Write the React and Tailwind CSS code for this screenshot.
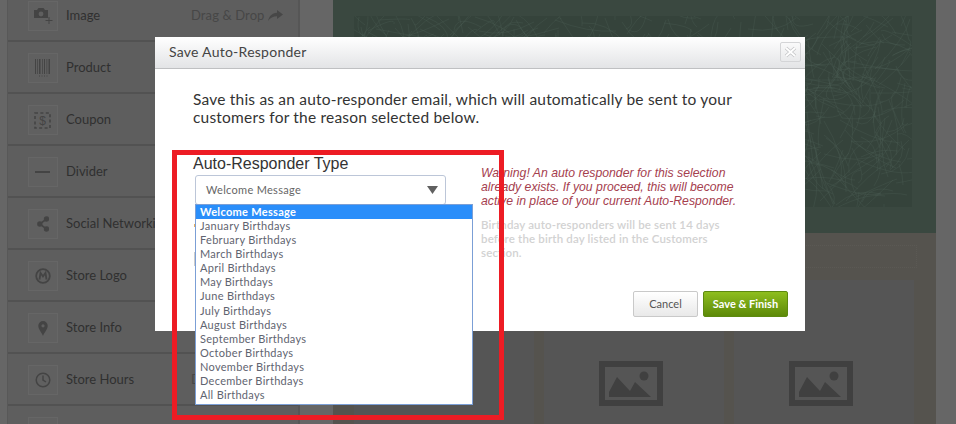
import React from "react";

const lato = "font-['Lato','Noto_Sans',sans-serif]";
const arial = "font-['Liberation_Sans',Arial,sans-serif]";

const Cam = () => (
  <svg width="20" height="20" viewBox="0 0 20 20" fill="#444">
    <path d="M1 4h3l1.500-2h5L12 4h3v8H1z" />
    <circle cx="8" cy="8" r="2.400" fill="#5f5f5f" />
    <path d="M16 11v7M12.500 14.500h7" stroke="#444" strokeWidth="1" fill="none" />
  </svg>
);
const Bar = () => (
  <svg width="16" height="18" viewBox="0 0 16 18" fill="#444">
    <path d="M0 0h1v15H0zM2 0h.7v15H2zM4 0h1.500v15H4zM7 0h.7v15H7zM9 0h1v15H9zM11.500 0h.7v15h-.7zM13.500 0h1.500v15h-1.500z" />
    <path d="M4 16.500h1v1H4zM6.500 16.500h1v1h-1zM9 16.500h1v1H9zM11.500 16.500h1v1h-1z" />
  </svg>
);
const Coupon = () => (
  <svg width="18" height="17" viewBox="0 0 18 17" fill="none" stroke="#444">
    <rect x="1" y="1" width="15" height="15" strokeWidth="1.600" strokeDasharray="3 2.400" />
    <text x="8.500" y="13" textAnchor="middle" fontSize="12" fontFamily="Liberation Sans" fill="#444" stroke="none">$</text>
  </svg>
);
const Dash = () => (
  <svg width="16" height="4" viewBox="0 0 16 4"><rect y="1" width="15" height="2" fill="#444" /></svg>
);
const Share = () => (
  <svg width="12" height="16" viewBox="0 0 12 16" fill="#444">
    <circle cx="9.500" cy="3" r="2.700" /><circle cx="2.800" cy="8" r="2.700" /><circle cx="9.500" cy="13" r="2.700" />
    <path d="M9.500 3 2.800 8l6.700 5" stroke="#444" strokeWidth="1.600" fill="none" />
  </svg>
);
const Logo = () => (
  <svg width="16" height="16" viewBox="0 0 16 16">
    <circle cx="8" cy="8" r="6.800" fill="none" stroke="#444" strokeWidth="1.800" />
    <path d="M4.500 11.500 5.500 4.800 8 8.500l2.500-3.700 1 6.700" fill="none" stroke="#444" strokeWidth="1.800" />
  </svg>
);
const Pin = () => (
  <svg width="10" height="15" viewBox="0 0 10 15">
    <path fillRule="evenodd" fill="#444" d="M5 0a4.700 4.700 0 0 1 4.700 4.700C9.700 8 6.500 11 5 15 3.500 11 .3 8 .3 4.700A4.700 4.700 0 0 1 5 0zm0 3.200a1.600 1.600 0 1 0 0 3.200 1.600 1.600 0 0 0 0-3.200z" />
  </svg>
);
const Clock = () => (
  <svg width="16" height="16" viewBox="0 0 16 16" fill="none" stroke="#444" strokeWidth="1.500">
    <circle cx="8" cy="8" r="6.800" /><path d="M8 3.500V8l3 2" />
  </svg>
);

const rows = [
  ["Image", <Cam />, true], ["Product", <Bar />], ["Coupon", <Coupon />], ["Divider", <Dash />],
  ["Social Networking", <Share />], ["Store Logo", <Logo />], ["Store Info", <Pin />], ["Store Hours", <Clock />, true], ["", null],
];

const options = ["January", "February", "March", "April", "May", "June", "July", "August", "September", "October", "November", "December", "All"];

function scribble() {
  let seed = 17;
  const r = () => ((seed = (seed * 16807) % 2147483647) / 2147483647);
  const out = [];
  for (let i = 0; i < 900; i++) {
    const x = r() * 558, y = r() * 191, a = r() * 6.28, l = 20 + r() * 45;
    const x2 = x + Math.cos(a) * l, y2 = y + Math.sin(a) * l;
    const cx = (x + x2) / 2 + (r() - 0.5) * 30, cy = (y + y2) / 2 + (r() - 0.5) * 30;
    out.push(`M${x.toFixed(0)} ${y.toFixed(0)}Q${cx.toFixed(0)} ${cy.toFixed(0)} ${x2.toFixed(0)} ${y2.toFixed(0)}`);
  }
  return out;
}
const lines = scribble();

const Mountain = () => (
  <svg width="64" height="45" viewBox="0 0 64 45">
    <rect x="3" y="3" width="58" height="39" fill="none" stroke="#404040" strokeWidth="6" />
    <circle cx="45" cy="15" r="4.500" fill="#404040" />
    <path d="M10 36V31L18 16 31 30 36 21 52 36z" fill="#404040" />
  </svg>
);

const Tile = ({ icon }) => (
  <div className="w-[180px] h-[144px] bg-[#555555] flex justify-center pt-[81px] pr-[6px]">{icon && <Mountain />}</div>
);

export default function App() {
  return (
    <div className={`relative w-[956px] h-[424px] overflow-hidden flex bg-[#666666] ${lato}`}>
      <div className="w-2 shrink-0 bg-[#666666] border-r border-[#585858]" />
      <div className="w-[292px] shrink-0 bg-[#5e5e5e] border-r-2 border-[#565656] mt-[-10px] self-start">
        {rows.map(([name, icon, drag], i) => (
          <div key={i} className="h-[52px] pl-5 border-b-2 border-[#525252] flex items-start pt-[11px]">
            <div className="w-[30px] h-[30px] shrink-0 border border-[#666666] bg-[#606060] flex items-center justify-center">{icon}</div>
            <span className="ml-2 mt-[5px] text-[13px] leading-[18px] text-[#303030] whitespace-nowrap w-[125px]">{name}</span>
            {drag && (
              <span className="flex items-center gap-1 mt-[5px] text-[13px] leading-[18px] text-[#474747] whitespace-nowrap tracking-[0.1px]">
                Drag &amp; Drop
                <svg width="15" height="11" viewBox="0 0 15 11"><path d="M9 0l6 4.500L9 9V6.300C5 6.300 2.500 7.800 0 11 1 6 4 3 9 2.700z" fill="#474747" /></svg>
              </span>
            )}
          </div>
        ))}
      </div>
      <div className="w-[33px] shrink-0 bg-[#666666]" />
      <div className="w-[603px] shrink-0 flex flex-col bg-[#55534e]">
        <div className="h-[233px] bg-[#3a4840] pt-4 pl-[21px]">
          <svg width="558" height="191" viewBox="0 0 558 191" className="block bg-[#35433b]">
            {lines.map((d, i) => (
              <path key={i} d={d} fill="none" stroke="#4e5e55" strokeWidth="0.600" opacity={0.55} />
            ))}
          </svg>
        </div>
        <div className="ml-[17px] mr-[19px] mt-3 h-[23px] border border-dotted border-[#5b5954]" />
        <div className="mt-3 pl-[21px] flex gap-[10px]">
          <Tile />
          <Tile icon />
          <Tile icon />
        </div>
      </div>
      <div className="w-[20px] shrink-0 bg-[#666666]" />

      <div className="absolute left-[155px] top-[37px] w-[650px] h-[294px] bg-white rounded-tr-[3px] flex flex-col">
        <div className="h-[32px] shrink-0 bg-gradient-to-b from-white to-[#e3e4e6] border-b border-[#bfc0c2] flex items-center justify-between pl-[14px] pr-1">
          <span className="text-[14px] text-[#444444] tracking-[0.25px] mb-[2px]">Save Auto-Responder</span>
          <div className="w-[21px] h-[20px] mb-[1px] border border-[#d4d5d7] rounded-[2px] flex items-center justify-center">
            <svg width="13" height="12" viewBox="0 0 13 12"><path d="M2 2l9 8M11 2l-9 8" stroke="#c5c6c8" strokeWidth="3.500" /><path d="M2 2l9 8M11 2l-9 8" stroke="#fff" strokeWidth="1.800" fill="none" /></svg>
          </div>
        </div>
        <p className="mt-[21px] ml-[38px] text-[15.500px] leading-[18px] text-[#333333] w-[560px] tracking-[0.2px]">
          Save this as an auto-responder email, which will automatically be sent to your customers for the reason selected below.
        </p>
        <div className="flex mt-[29px] ml-[38px]">
          <div className="w-[288px] shrink-0">
            <div className={`text-[16px] leading-[18px] text-[#333333] ${arial}`}>Auto-Responder Type</div>
            <div className="relative ml-[2px] mt-[2px] w-[251px] h-[30px] rounded-[3px] border border-[#bcc6d8] bg-white flex items-center justify-between pl-[10px] pr-[7px]">
              <span className="text-[11px] text-[#666666] tracking-[0.3px]">Welcome Message</span>
              <svg width="11" height="8" viewBox="0 0 11 8"><path d="M0 0h11L5.500 8z" fill="#606060" /></svg>
              <div className="absolute left-[-1px] top-[28px] w-[278px] h-[201px] bg-white border border-[#7b9fd6] text-[11px] leading-[14.100px] text-[#5f6470] tracking-[0.3px]">
                <div className="bg-[#2a8efa] text-white font-bold pl-1 h-[14px] leading-[14px]">Welcome Message</div>
                {options.map((m) => (
                  <div key={m} className="pl-1 h-[14.100px]">{m} Birthdays</div>
                ))}
              </div>
            </div>
            <div className="ml-[1px] mt-[19px] w-[2px] h-[3px] bg-[#e8b060]" />
            <div className="ml-[1px] mt-[25px] w-[2px] h-[14px] bg-[#cccccc]" />
          </div>
          <div className="w-[250px] mt-[11px]">
            <p className={`italic text-[12.250px] leading-[14px] text-[#a5404e] whitespace-nowrap ${arial}`}>
              Warning! An auto responder for this selection<br />already exists. If you proceed, this will become<br />active in place of your current Auto-Responder.
            </p>
            <p className="mt-[10px] text-[11.500px] leading-[14px] font-semibold text-[#d2d2d2] whitespace-nowrap tracking-[0.15px]">
              Birthday auto-responders will be sent 14 days<br />before the birth day listed in the Customers<br />section.
            </p>
          </div>
        </div>
        <div className="mt-auto mb-[14px] mr-[17px] flex justify-end gap-[5px]">
          <button className="w-[65px] h-[26px] rounded-[2px] border border-[#c9c9c9] bg-gradient-to-b from-white to-[#e9e9e9] text-[11px] text-[#555555]">Cancel</button>
          <button className="w-[85px] h-[26px] rounded-[2px] border border-[#5d8a10] bg-gradient-to-b from-[#8ebe1e] to-[#5d8a08] text-[11px] font-bold text-white">Save &amp; Finish</button>
        </div>
      </div>

      <div className="absolute left-[172px] top-[150px] w-[332px] h-[270px] border-[5px] border-[#ed1c24]" />
    </div>
  );
}
